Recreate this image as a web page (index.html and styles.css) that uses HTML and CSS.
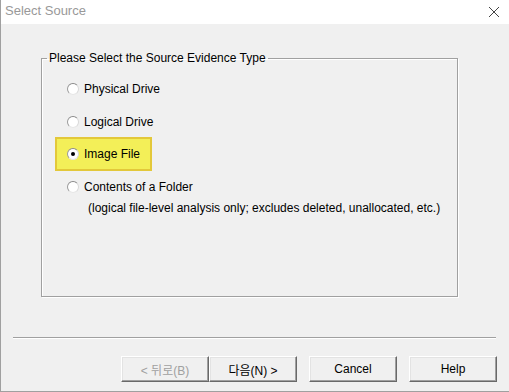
FILE: index.html
```html
<!DOCTYPE html>
<html lang="en">
<head>
    <meta charset="UTF-8">
    <title>Select Source</title>
    <link rel="stylesheet" href="styles.css">
</head>
<body>
    <div class="window">
        <div class="titlebar">
            <span class="title">Select Source</span>
            <svg class="close" width="12" height="12" viewBox="0 0 12 12">
                <path d="M1 1 L11 11 M11 1 L1 11" stroke="#444" stroke-width="1" fill="none"/>
            </svg>
        </div>

        <div class="content">
            <fieldset class="group">
                <legend>Please Select the Source Evidence Type</legend>
                <div class="options">
                    <label class="option"><span class="radio"></span>Physical Drive</label>
                    <label class="option"><span class="radio"></span>Logical Drive</label>
                    <label class="option marked"><span class="radio checked"></span>Image File</label>
                    <div class="folder">
                        <label class="option"><span class="radio"></span>Contents of a Folder</label>
                        <p class="note">(logical file-level analysis only; excludes deleted, unallocated, etc.)</p>
                    </div>
                </div>
            </fieldset>

            <div class="separator"></div>

            <div class="buttons">
                <div class="pair">
                    <button class="btn" disabled>&lt; 뒤로(B)</button>
                    <button class="btn">다음(N) &gt;</button>
                </div>
                <button class="btn">Cancel</button>
                <button class="btn">Help</button>
            </div>
        </div>
    </div>
</body>
</html>
```

FILE: styles.css
```css
body {
    margin: 0;
    font-family: "Liberation Sans", "Noto Sans CJK KR", sans-serif;
    font-size: 12px;
    color: #000;
}
.window {
    width: 508px;
    height: 391px;
    border-left: 1px solid #a0a0a0;
    border-bottom: 1px solid #a0a0a0;
    background: #f0f0f0;
    display: flex;
    flex-direction: column;
}
.titlebar {
    height: 24px;
    background: #fff;
    display: flex;
    align-items: center;
    justify-content: space-between;
    padding: 0 9px 3px 4px;
    box-sizing: border-box;
}
.title {
    font-size: 13px;
    color: #999;
}
.close {
    display: block;
    margin-top: 2px;
}
.content {
    display: flex;
    flex-direction: column;
}
.group {
    box-sizing: border-box;
    width: 417px;
    height: 247px;
    margin: 26px 0 0 40px;
    padding: 0;
    border: 1px solid #a0a0a0;
    box-shadow: 1px 1px 0 #fff, inset 1px 1px 0 #fff;
}
.group legend {
    margin-left: 5px;
    padding: 0 2px;
    line-height: 16px;
}
.options {
    display: flex;
    flex-direction: column;
    gap: 12.7px;
    padding: 13px 0 0 25px;
}
.option {
    display: flex;
    align-items: center;
    gap: 5px;
    height: 20px;
}
.marked {
    align-self: flex-start;
    margin: -7px 0 -7px -12px;
    padding: 5px 10px;
    border: 2px solid #e3c83a;
    background: #f3ef58;
}
.radio {
    box-sizing: border-box;
    width: 12px;
    height: 12px;
    border-radius: 50%;
    border: 1px solid;
    border-color: #8a8a8a #d8d8d8 #e6e6e6 #9a9a9a;
    background: #fff;
    display: flex;
    align-items: center;
    justify-content: center;
}
.radio.checked::after {
    content: "";
    width: 4px;
    height: 4px;
    border-radius: 50%;
    background: #000;
}
.note {
    margin: 3px 0 0 21px;
    line-height: 16px;
    white-space: nowrap;
}
.separator {
    margin: 40px 13px 0 12px;
    border-top: 1px solid #a0a0a0;
    border-bottom: 1px solid #fff;
}
.buttons {
    display: flex;
    justify-content: flex-end;
    gap: 12px;
    margin: 17px 12px 0 0;
}
.pair {
    display: flex;
}
.btn {
    box-sizing: border-box;
    width: 88px;
    height: 26px;
    font-family: inherit;
    font-size: 12px;
    color: #000;
    background: #f0f0f0;
    border: 1px solid;
    border-color: #fff #696969 #696969 #fff;
    box-shadow: inset -1px -1px 0 #a0a0a0, inset 1px 1px 0 #e3e3e3;
    padding: 0;
}
.btn:disabled {
    color: #a0a0a0;
}
```
